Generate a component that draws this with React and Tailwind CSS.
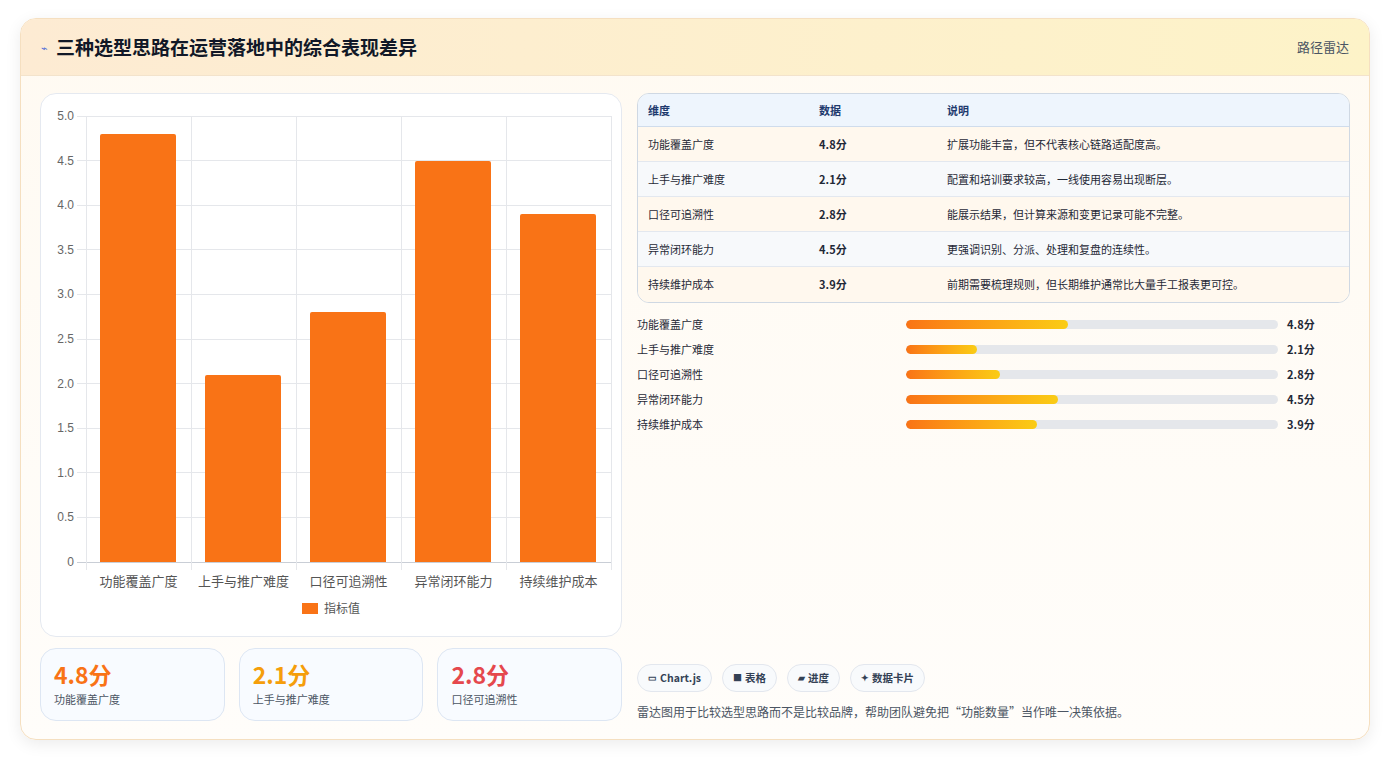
export default function App() {
  const rows = [
    ["功能覆盖广度", "4.8分", "扩展功能丰富，但不代表核心链路适配度高。", 4.8],
    ["上手与推广难度", "2.1分", "配置和培训要求较高，一线使用容易出现断层。", 2.1],
    ["口径可追溯性", "2.8分", "能展示结果，但计算来源和变更记录可能不完整。", 2.8],
    ["异常闭环能力", "4.5分", "更强调识别、分派、处理和复盘的连续性。", 4.5],
    ["持续维护成本", "3.9分", "前期需要梳理规则，但长期维护通常比大量手工报表更可控。", 3.9],
  ];
  const font = { fontFamily: '"Noto Sans CJK SC", "Noto Sans", sans-serif' };
  const ticks = ["5.0", "4.5", "4.0", "3.5", "3.0", "2.5", "2.0", "1.5", "1.0", "0.5", "0"];
  return (
    <div className="w-[1390px] h-[760px] bg-white pt-[18px] pl-[20px]" style={font}>
      <div className="w-[1350px] h-[722px] rounded-2xl border border-[#f5dfc0] shadow-[0_4px_16px_rgba(0,0,0,0.08)] bg-gradient-to-b from-[#fffaf2] to-[#fffdfa] overflow-hidden flex flex-col">
        <div className="h-[57px] flex items-center justify-between px-5 bg-gradient-to-r from-[#fdebd3] to-[#fdf3c8] border-b border-[#f3e3cc]">
          <div className="flex items-center gap-2">
            <span className="text-[11px] text-[#4f6bd8]">⌁</span>
            <span className="text-[19px] font-bold text-[#111827]">三种选型思路在运营落地中的综合表现差异</span>
          </div>
          <span className="text-[13px] text-[#4b5563]">路径雷达</span>
        </div>
        <div className="flex gap-[15px] px-[19px] pt-[17px]">
          <div className="w-[583px] flex flex-col gap-[11px]">
            <div className="h-[544px] bg-white rounded-2xl border border-[#e5e9f0] relative">
              {ticks.map((t, i) => (
                <div key={t} className="absolute left-0 flex items-center" style={{ top: 22 + i * 44.6 - 7 }}>
                  <span className="w-[33px] text-right text-[12px] text-[#666] leading-[14px]" style={{ fontFamily: '"Liberation Sans", sans-serif' }}>{t}</span>
                  <span className={`ml-[3px] h-px w-[535px] ${i === 10 ? "bg-[#c9ced6]" : "bg-[#e5e7eb]"}`}></span>
                </div>
              ))}
              {[0, 1, 2, 3, 4, 5].map((i) => (
                <div key={i} className="absolute w-px bg-[#e5e7eb]" style={{ left: 45 + i * 105, top: 22, height: 454 }}></div>
              ))}
              {rows.map((r, i) => (
                <div key={r[0]}>
                  <div className="absolute bg-[#f97316] rounded-t-[2px]" style={{ left: 59 + i * 105, width: 76, top: 22 + (5 - r[3]) * 89.2, height: r[3] * 89.2 }}></div>
                  <div className="absolute text-[13px] text-[#555] text-center w-[105px]" style={{ left: 45 + i * 105, top: 477 }}>{r[0]}</div>
                </div>
              ))}
              <div className="absolute left-[261px] top-[505px] flex items-center gap-[6px]">
                <span className="w-[16px] h-[11px] bg-[#f97316]"></span>
                <span className="text-[12px] text-[#555]">指标值</span>
              </div>
            </div>
            <div className="flex gap-[14px]">
              {[["4.8分", "功能覆盖广度", "text-[#f97316]"], ["2.1分", "上手与推广难度", "text-[#f59e0b]"], ["2.8分", "口径可追溯性", "text-[#e5484d]"]].map(([v, l, c]) => (
                <div key={l} className="flex-1 h-[73px] rounded-2xl border border-[#dde6f3] bg-[#f8fbff] px-[13px] pt-[10px]">
                  <div className={`text-[23px] font-bold leading-[30px] ${c}`}>{v}</div>
                  <div className="text-[11px] text-[#4b5563] mt-[2px]">{l}</div>
                </div>
              ))}
            </div>
          </div>
          <div className="w-[714px] flex flex-col h-[628px]">
            <div className="rounded-xl border border-[#cfd8e3] overflow-hidden">
              <div className="flex h-[33px] items-center bg-[#eef5fd] border-b border-[#cfdcec] text-[11px] font-bold text-[#1e3a6e] px-[10px]">
                <span className="w-[171px]">维度</span><span className="w-[128px]">数据</span><span>说明</span>
              </div>
              {rows.map((r, i) => (
                <div key={r[0]} className={`flex h-[35px] items-center text-[11px] text-[#1f2937] px-[10px] ${i % 2 ? "bg-[#f7f9fb]" : "bg-[#fff8ee]"} ${i < 4 ? "border-b border-[#e3e8ef]" : ""}`}>
                  <span className="w-[171px]">{r[0]}</span><span className="w-[128px] font-semibold">{r[1]}</span><span>{r[2]}</span>
                </div>
              ))}
            </div>
            <div className="flex flex-col gap-[7px] mt-[12px]">
              {rows.map((r) => (
                <div key={r[0]} className="flex items-center h-[18px] text-[11px] text-[#1f2937]">
                  <span className="w-[269px]">{r[0]}</span>
                  <div className="w-[372px] h-[9px] rounded-full bg-[#e5e7eb] overflow-hidden">
                    <div className="h-full rounded-full bg-gradient-to-r from-[#f97316] to-[#facc15]" style={{ width: `${(r[3] / 11.05) * 100}%` }}></div>
                  </div>
                  <span className="ml-[9px] font-bold">{r[1]}</span>
                </div>
              ))}
            </div>
            <div className="mt-auto">
              <div className="flex gap-[10px]">
                {[["▭", "Chart.js"], ["■", "表格"], ["▰", "进度"], ["✦", "数据卡片"]].map(([ic, t]) => (
                  <span key={t} className="h-[28px] px-[10px] rounded-full border border-[#e3e7ee] bg-[#f8fafc] flex items-center gap-[3px] text-[10.5px] font-semibold text-[#334155]">
                    <span className="text-[9px]">{ic}</span>{t}
                  </span>
                ))}
              </div>
              <div className="mt-[11px] text-[12px] text-[#4b5563]">雷达图用于比较选型思路而不是比较品牌，帮助团队避免把“功能数量”当作唯一决策依据。</div>
            </div>
          </div>
        </div>
      </div>
    </div>
  );
}
